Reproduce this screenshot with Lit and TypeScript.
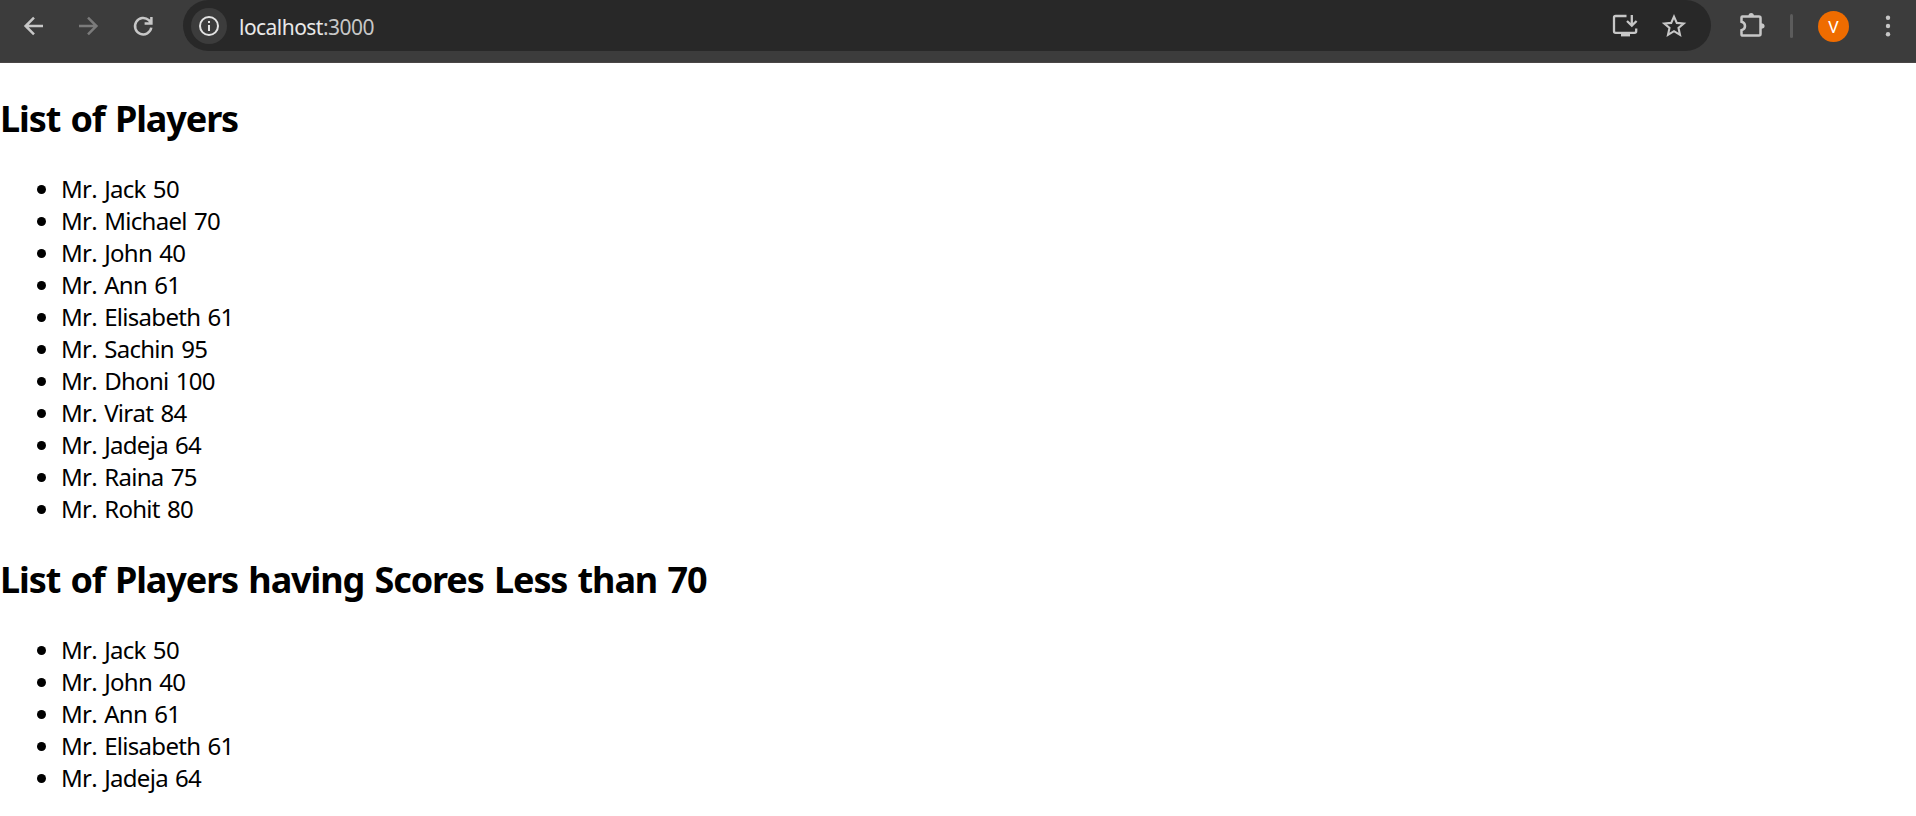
import { LitElement, html, css, svg } from "lit";
import { customElement, property } from "lit/decorators.js";

interface Player {
  name: string;
  score: number;
}

const PLAYERS: Player[] = [
  { name: "Jack", score: 50 },
  { name: "Michael", score: 70 },
  { name: "John", score: 40 },
  { name: "Ann", score: 61 },
  { name: "Elisabeth", score: 61 },
  { name: "Sachin", score: 95 },
  { name: "Dhoni", score: 100 },
  { name: "Virat", score: 84 },
  { name: "Jadeja", score: 64 },
  { name: "Raina", score: 75 },
  { name: "Rohit", score: 80 },
];

@customElement("browser-bar")
export class BrowserBar extends LitElement {
  static styles = css`
    :host {
      display: flex;
      box-sizing: border-box;
      height: 63px;
      padding-left: 20px;
      background: #3c3c3c;
      border-bottom: 1px solid #4a4646;
      font-family: "Noto Sans", "Open Sans", sans-serif;
      color: #c7c7c7;
    }
    .row { display: flex; align-items: center; height: 52px; width: 100%; }
    svg { display: block; flex: none; }
    .nav { display: flex; gap: 27px; width: 163px; flex: none; }
    .dim { color: #7b7b7b; }
    .pill {
      display: flex;
      align-items: center;
      box-sizing: border-box;
      align-self: flex-start;
      width: 1528px;
      height: 51px;
      padding: 1px 23px 0 8px;
      border-radius: 25.5px;
      background: #282828;
      flex: none;
    }
    .info {
      display: grid;
      place-items: center;
      width: 36px;
      height: 36px;
      border-radius: 50%;
      background: #3c3c3c;
      color: #e3e3e3;
    }
    .url {
      flex: 1;
      margin-left: 12px;
      padding-top: 1px;
      font-size: 21px;
      line-height: 28px;
      letter-spacing: -0.54px;
      color: #c7c7c7;
    }
    .host { color: #e8e8e8; }
    .actions { display: flex; gap: 21px; }
    .puzzle { margin-left: 25px; }
    .sep { width: 3px; height: 24px; margin-left: 24px; border-radius: 2px; background: #5c5c5c; }
    .avatar {
      display: grid;
      place-items: center;
      width: 31px;
      height: 31px;
      margin-left: 25px;
      margin-top: 1px;
      border-radius: 50%;
      background: #ef6c00;
      color: #fff;
      font-family: Roboto, sans-serif;
      font-size: 17px;
    }
    .more { margin-left: 25px; }
  `;

  render() {
    const line = (d: string, w = 2.3) =>
      svg`<path d=${d} fill="none" stroke="currentColor" stroke-width=${w}></path>`;
    return html`
      <div class="row">
        <div class="nav">
          <svg width="28" height="28" viewBox="0 0 28 28">${line("M23 14H6M14 5.6L5.6 14L14 22.4", 2.5)}</svg>
          <svg class="dim" width="28" height="28" viewBox="0 0 28 28">${line("M4 14H21M13 5.6L21.4 14L13 22.4", 2.5)}</svg>
          <svg width="28" height="28" viewBox="0 0 28 28">
            ${line("M21.3 15.6A8.2 8.2 0 1 1 18.8 8.2L20.6 10.2M21.4 5V11.6H14.6", 2.5)}
          </svg>
        </div>
        <div class="pill">
          <div class="info">
            <svg width="22" height="22" viewBox="0 0 22 22">
              <circle cx="11" cy="11" r="9" fill="none" stroke="currentColor" stroke-width="2"></circle>
              <path d="M10 10h2v6h-2zM10 6h2v2h-2z" fill="currentColor"></path>
            </svg>
          </div>
          <div class="url"><span class="host">localhost</span>:3000</div>
          <div class="actions">
            <svg width="28" height="28" viewBox="0 0 28 28">
              ${line("M15.5 4H4.6Q3 4 3 5.6V19.2Q3 20.8 4.6 20.8H23.4Q25.2 20.8 25.2 19.2V16.6M20.8 3V13M16 9L20.8 13.6L25.6 9")}
              <path d="M10 20h9v4.4h-9z" fill="currentColor"></path>
            </svg>
            <svg width="28" height="28" viewBox="0 0 28 28">
              ${line("M14 4.6L16.8 10.9L23.7 11.5L18.5 16L20 22.9L14 19.2L8 22.9L9.5 16L4.3 11.5L11.2 10.9Z", 2.1)}
            </svg>
          </div>
        </div>
        <svg class="puzzle" width="30" height="30" viewBox="0 0 30 30">
          ${line("M6.4 5.4H23Q24.5 5.4 24.5 6.9V23.1Q24.5 24.6 23 24.6H6.9Q5.5 24.6 5.5 23.2V19.2Q9 18.2 9 15Q9 11.8 5.5 10.8V6.4Q5.5 5.4 6.4 5.4Z", 2.5)}
          <path d="M12.4 5Q12.6 1.9 15.2 1.9Q17.8 1.9 18 5ZM25 12.2Q28.6 12.4 28.6 15Q28.6 17.6 25 17.8Z" fill="currentColor"></path>
        </svg>
        <div class="sep"></div>
        <div class="avatar">V</div>
        <svg class="more" width="28" height="28" viewBox="0 0 28 28" fill="currentColor">
          <circle cx="14" cy="5.7" r="2.2"></circle>
          <circle cx="14" cy="14" r="2.2"></circle>
          <circle cx="14" cy="22.3" r="2.2"></circle>
        </svg>
      </div>
    `;
  }
}

@customElement("player-list")
export class PlayerList extends LitElement {
  @property() heading = "";
  @property({ attribute: false }) players: Player[] = [];

  static styles = css`
    :host { display: block; }
    .title {
      margin: 30px 0;
      font-size: 36px;
      font-weight: 700;
      line-height: 49px;
      letter-spacing: -1.1px;
      word-spacing: 2px;
      white-space: nowrap;
    }
    .list { margin: 0; padding: 0 0 0 37px; list-style: none; }
    .item {
      display: flex;
      align-items: center;
      gap: 15px;
      height: 32px;
      line-height: 32px;
      font-kerning: none;
      letter-spacing: -0.7px;
      word-spacing: 1.6px;
    }
    .item::before { content: ""; width: 9px; height: 9px; margin-top: 1px; border-radius: 50%; background: #000; }
  `;

  render() {
    return html`
      <h2 class="title">${this.heading}</h2>
      <ul class="list">
        ${this.players.map((p) => html`<li class="item">Mr. ${p.name} ${p.score}</li>`)}
      </ul>
    `;
  }
}

@customElement("app-root")
export class AppRoot extends LitElement {
  static styles = css`
    :host {
      display: block;
      height: 816px;
      overflow: hidden;
      background: #fff;
      color: #000;
      font-family: "Noto Sans", "Open Sans", sans-serif;
      font-size: 24px;
    }
    .page { display: flow-root; padding-top: 1px; }
  `;

  render() {
    return html`
      <browser-bar></browser-bar>
      <main class="page">
        <player-list heading="List of Players" .players=${PLAYERS}></player-list>
        <player-list
          heading="List of Players having Scores Less than 70"
          .players=${PLAYERS.filter((p) => p.score < 70)}
        ></player-list>
      </main>
    `;
  }
}
